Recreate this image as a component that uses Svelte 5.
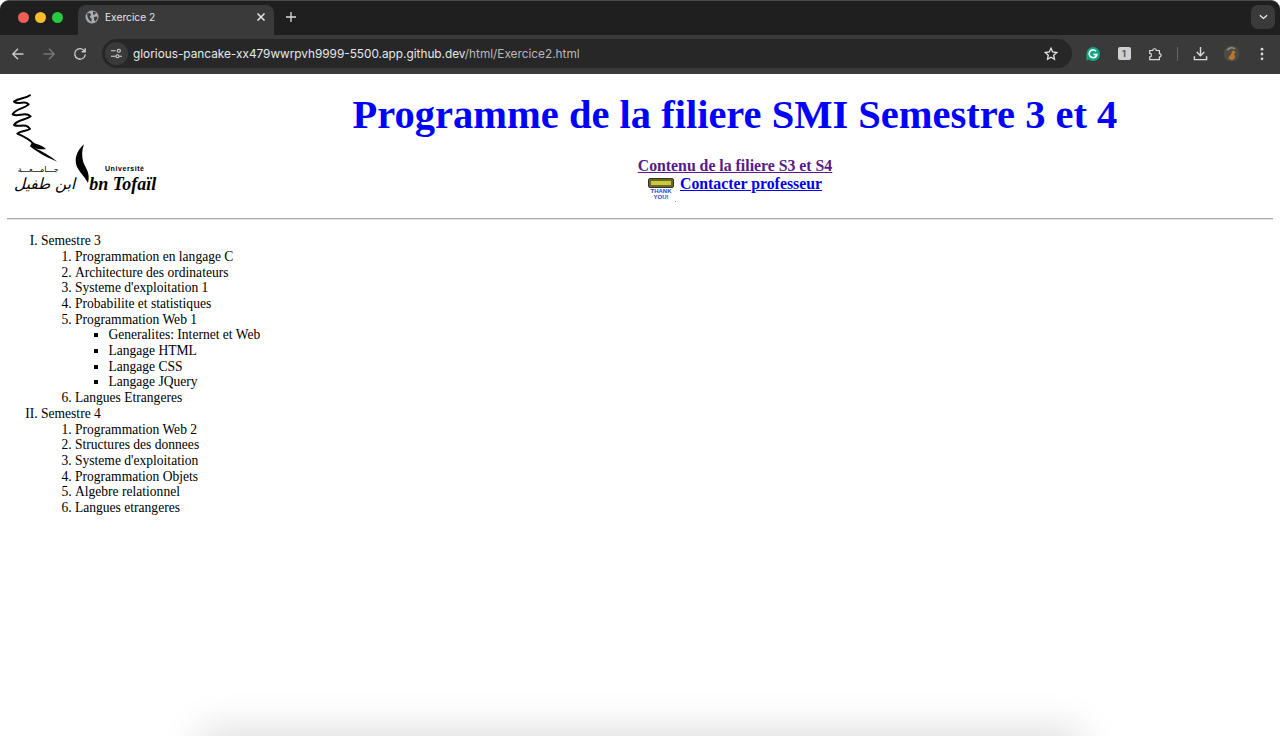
<script>
  const s3 = ['Programmation en langage C','Architecture des ordinateurs',"Systeme d'exploitation 1",'Probabilite et statistiques'];
  const web = ['Generalites: Internet et Web','Langage HTML','Langage CSS','Langage JQuery'];
  const s4 = ['Programmation Web 2','Structures des donnees',"Systeme d'exploitation",'Programmation Objets','Algebre relationnel','Langues etrangeres'];
</script>

<div class="window">
  <div class="tabstrip">
    <div class="lights"><i class="red"></i><i class="yellow"></i><i class="green"></i></div>
    <div class="tab">
      <svg class="globe" viewBox="0 0 14 14" width="14" height="14"><circle cx="7" cy="7" r="6.5" fill="#a9abae"/><path d="M2 3.5 5 3l1 2-1.5 2 2 1.5V12L4 10 2.5 7zM8 1.5l3 1-1 2H8zM9 7l3-.5.5 2-2.5 3-1-2z" fill="#3b3b3b"/></svg>
      <span class="title">Exercice 2</span>
      <svg class="close" viewBox="0 0 10 10" width="10" height="10"><path d="M1.5 1.5l7 7M8.5 1.5l-7 7" stroke="#e8e8e8" stroke-width="1.5"/></svg>
    </div>
    <svg class="plus" viewBox="0 0 12 12" width="12" height="12"><path d="M6 1v10M1 6h10" stroke="#dcdcdc" stroke-width="1.3"/></svg>
    <div class="spacer"></div>
    <div class="tabsearch"><svg viewBox="0 0 10 6" width="9" height="6"><path d="M1 1l4 3.6L9 1" fill="none" stroke="#eee" stroke-width="1.5"/></svg></div>
  </div>
  <div class="toolbar">
    <svg class="nav" viewBox="0 0 14 14" width="14" height="14"><path d="M12.5 7H2M7 1.8 1.8 7 7 12.2" fill="none" stroke="#c9c9c9" stroke-width="1.4"/></svg>
    <svg class="nav" viewBox="0 0 14 14" width="14" height="14"><path d="M1.5 7H12M7 1.8 12.2 7 7 12.2" fill="none" stroke="#777" stroke-width="1.4"/></svg>
    <svg class="nav" viewBox="0 0 14 14" width="14" height="14"><path d="M11.6 4.2A5.3 5.3 0 1 0 12.3 7.5M12.2 1.2v3.6H8.6" fill="none" stroke="#c9c9c9" stroke-width="1.4"/></svg>
    <div class="omni">
      <div class="tune"><svg viewBox="0 0 14 12" width="13" height="11"><path d="M1 3h5M1 9h5M10 9h3" stroke="#d5d5d5" stroke-width="1.3"/><circle cx="9.5" cy="3" r="1.7" fill="none" stroke="#d5d5d5" stroke-width="1.2"/><circle cx="8" cy="9" r="1.7" fill="none" stroke="#d5d5d5" stroke-width="1.2"/></svg></div>
      <span class="url"><b>glorious-pancake-xx479wwrpvh9999-5500.app.github.dev</b>/html/Exercice2.html</span>
      <svg class="star" viewBox="0 0 14 14" width="14" height="14"><path d="M7 1.3l1.7 3.7 4 .5-3 2.7.8 4L7 10.2l-3.500 2 .8-4-3-2.700 4-.5z" fill="none" stroke="#e5e5e5" stroke-width="1.3"/></svg>
    </div>
    <div class="exts">
      <div class="cell"><svg viewBox="0 0 16 16" width="16" height="16"><path d="M8 1a7 7 0 1 1-4.600 12.300L1.500 15V8A6.500 7 0 0 1 8 1z" fill="#11a683"/><path d="M11 5.200A3.900 3.900 0 1 0 11.900 8.500H8.500" fill="none" stroke="#fff" stroke-width="1.600"/></svg></div>
      <div class="cell"><div class="k"><span>1</span></div></div>
      <div class="cell"><svg viewBox="0 0 16 16" width="14" height="14"><path d="M2 4h3.500a2 2 0 1 1 4 0H13v3.500a2 2 0 1 1 0 4V14.500H2v-3.200a2 2 0 1 0 0-4z" fill="none" stroke="#d9d9d9" stroke-width="1.400"/></svg></div>
      <div class="sep"></div>
      <div class="cell"><svg viewBox="0 0 16 16" width="15" height="15"><path d="M8 1v9M4 6.500l4 4 4-4M1.500 11v3.500h13V11" fill="none" stroke="#d9d9d9" stroke-width="1.500"/></svg></div>
      <div class="cell"><svg viewBox="0 0 16 16" width="17" height="17"><circle cx="8" cy="8" r="7.500" fill="#4d4a42"/><path d="M5 13c1-4 3-3 3-6 0-2 3-2 4 0-1 0-2 1-1 3s-1 4-3 4z" fill="#b5772e"/><path d="M4 5c2-3 6-3 7-1" fill="none" stroke="#8a8f8c" stroke-width="1.500"/></svg></div>
      <div class="cell"><svg viewBox="0 0 4 14" width="4" height="14"><circle cx="2" cy="2.200" r="1.400" fill="#d9d9d9"/><circle cx="2" cy="7" r="1.400" fill="#d9d9d9"/><circle cx="2" cy="11.800" r="1.400" fill="#d9d9d9"/></svg></div>
    </div>
  </div>

  <main class="page">
    <header class="head">
      <svg class="logo" viewBox="21 0 489 360" width="163" height="120">
        <path d="M90 31C76 42 58 38 42 50C56 62 74 44 86 58C72 72 48 70 38 88C54 98 76 78 92 94C78 106 54 102 42 120C58 128 78 112 90 132C76 140 62 136 52 146C66 152 88 162 100 176" fill="none" stroke="#000" stroke-width="6" stroke-linejoin="round" stroke-linecap="round"/>
        <path d="M96 172C112 178 128 182 138 192C124 194 112 192 104 189C128 200 150 212 172 230C146 220 118 206 90 184z" fill="#000"/>
        <path d="M252 178C234 194 224 214 228 236C232 256 250 268 264 294C272 266 258 252 250 232C245 214 245 196 252 178z" fill="#000"/>
        <text x="176" y="261" class="ar small">جـــامـــعـــة</text>
        <text x="226" y="312" class="ar big">ابن طفيل</text>
        <text x="315" y="258" class="univ">Université</text>
        <text x="268" y="314" class="ibn">bn Tofaïl</text>
      </svg>
      <div class="titles">
        <h1>Programme de la filiere SMI Semestre 3 et 4</h1>
        <a class="visited" href="#s">Contenu de la filiere S3 et S4</a>
        <div class="contact">
          <span class="thanks"><span class="btn"><i></i></span><span class="ty">THANK<br>YOU!</span><span class="dot"></span></span>
          <a class="link" href="#c">Contacter professeur</a>
        </div>
      </div>
    </header>
    <hr />
    <ol class="roman">
      <li>Semestre 3
        <ol>
          {#each s3 as x}<li>{x}</li>{/each}
          <li>Programmation Web 1
            <ul>{#each web as x}<li>{x}</li>{/each}</ul>
          </li>
          <li>Langues Etrangeres</li>
        </ol>
      </li>
      <li>Semestre 4
        <ol>{#each s4 as x}<li>{x}</li>{/each}</ol>
      </li>
    </ol>
  </main>
  <div class="shadow"></div>
</div>

<style>
  :global(body) { margin: 0; background: #fff; }
  .window { position: relative; width: 1280px; height: 736px; overflow: hidden; display: flex; flex-direction: column; font-family: "Liberation Serif", serif; background: #fff; }
  .tabstrip { height: 35px; flex: none; background: #1f1f20; display: flex; align-items: flex-end; box-sizing: border-box; border-top: 1px solid #4a4a4a; border-radius: 9px 9px 0 0; font-family: Inter, "Liberation Sans", sans-serif; }
  .lights { width: 78px; height: 34px; flex: none; display: flex; align-items: center; gap: 6px; padding: 0 0 2px 17.500px; box-sizing: border-box; }
  .lights i { width: 11px; height: 11px; border-radius: 50%; }
  .red { background: #f05f57; } .yellow { background: #f9bd2e; } .green { background: #28c840; }
  .tab { width: 196px; height: 30px; flex: none; background: #3a3a3b; border-radius: 8px 8px 0 0; display: flex; align-items: center; padding: 0 8px 6px 7px; box-sizing: border-box; }
  .title { color: #e3e3e3; font-size: 10.200px; margin-left: 6px; flex: 1; }
  .plus { margin: 0 0 12px 11px; }
  .spacer { flex: 1; }
  .tabsearch { width: 24px; height: 24px; background: #3a3a3b; border-radius: 7px; display: flex; align-items: center; justify-content: center; margin: 0 5px 6px 0; }
  .toolbar { height: 39px; flex: none; background: #3a3a3b; display: flex; align-items: center; padding: 0 0 2px 11px; box-sizing: border-box; font-family: Inter, "Liberation Sans", sans-serif; }
  .nav { margin-right: 17px; }
  .omni { width: 970px; height: 29px; margin-left: -2px; flex: none; background: #272728; border-radius: 15px; display: flex; align-items: center; padding: 0 14px 0 3px; box-sizing: border-box; }
  .tune { width: 23px; height: 23px; border-radius: 50%; background: #3a3a3b; display: flex; align-items: center; justify-content: center; }
  .url { color: #b9b9b9; font-size: 11.800px; margin-left: 5px; flex: 1; white-space: nowrap; }
  .url b { color: #e8e8e8; font-weight: 400; }
  .exts { display: flex; align-items: center; margin-left: 5.500px; }
  .cell { width: 31px; display: flex; align-items: center; justify-content: center; }
  .k { width: 13px; height: 13px; border-radius: 2px; background: #cfcfcf; color: #555; font-size: 9px; font-weight: 700; display: flex; align-items: center; justify-content: center; }
  .sep { width: 1px; height: 14px; background: #666; margin: 0 7px 0 6px; }

  .page { flex: 1; padding: 0 7px; color: #000; font-size: 13.550px; line-height: 15.700px; }
  .head { display: flex; align-items: flex-start; height: 144px; }
  .logo { flex: none; margin: 11px 27px 0 0; display: block; }
  .titles { flex: 1; text-align: center; }
  h1 { margin: 17px 0 0; color: #00f; font-size: 40.500px; line-height: 47px; font-weight: 700; }
  .titles a { font-size: 15.800px; font-weight: 700; line-height: 18px; }
  .visited { display: block; margin-top: 19px; color: #551a8b; }
  .link { color: #00e; }
  .contact { display: flex; justify-content: center; align-items: flex-start; gap: 6px; height: 20px; }
  .thanks { position: relative; width: 26px; display: block; margin-top: 3px; }
  .btn { display: block; height: 10px; background: #6b6a1c; border: 1px solid #333; border-radius: 2px; box-sizing: border-box; padding: 2px; }
  .btn i { display: block; height: 100%; background: #c9c940; }
  .ty { display: block; color: #3a3ad0; font: 700 6px/6px "Liberation Sans", sans-serif; }
  .dot { position: absolute; left: 27px; top: 23px; width: 1px; height: 1px; background: #888; }
  hr { margin: 0; height: 1px; border: 0; background: #a9a9a9; box-shadow: 0 1px 0 #e2e2e2; }
  ol, ul { margin: 0; padding-left: 34px; }
  ul { padding-left: 33.500px; list-style: square; }
  .roman { list-style: upper-roman; margin-top: 14.100px; }
  .roman ol { list-style: decimal; }
  .ar { font-family: "DejaVu Sans", sans-serif; direction: rtl; }
  .small { font-size: 24px; }
  .big { font-size: 46px; font-style: italic; }
  .univ { font: 700 21px "Liberation Sans", sans-serif; letter-spacing: 1.700px; }
  .ibn { font: italic 700 54px "Liberation Serif", serif; }
  .shadow { position: absolute; left: 208px; top: 738px; width: 865px; height: 40px; box-shadow: 0 0 40px 8px rgba(0,0,0,.14); }
</style>
